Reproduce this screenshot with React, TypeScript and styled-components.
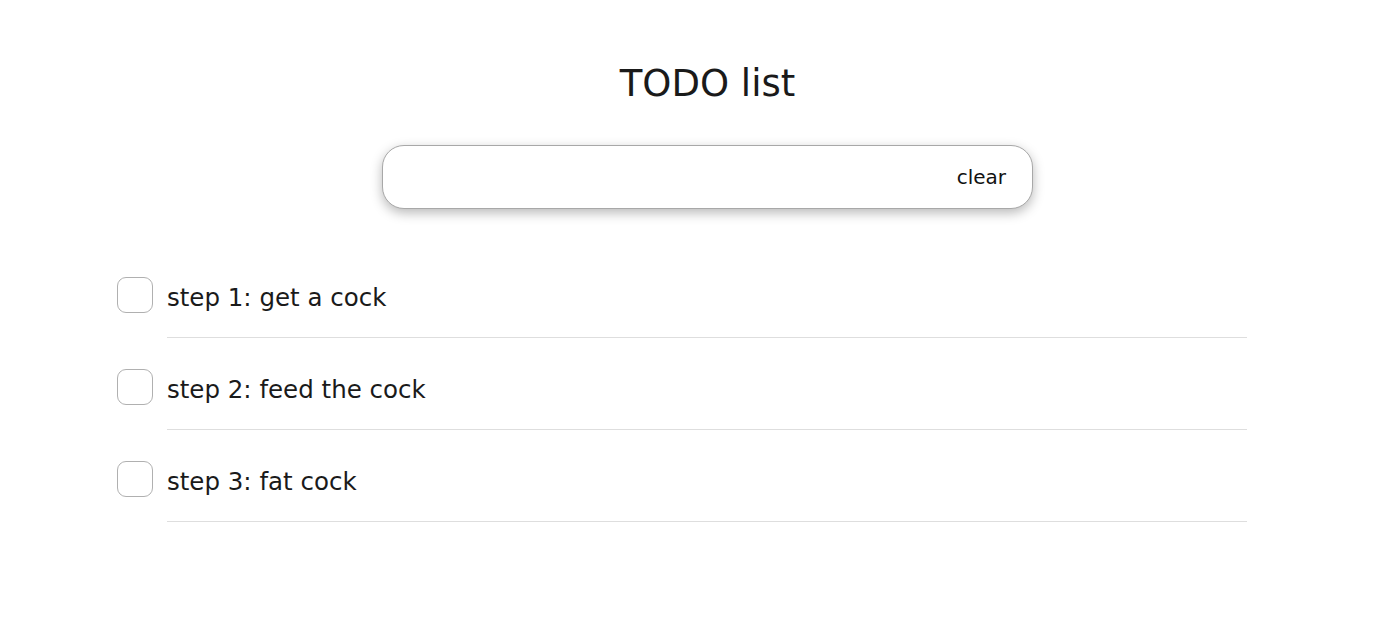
import React from "react";
import styled, { createGlobalStyle } from "styled-components";

const Global = createGlobalStyle`
  html, body { margin: 0; padding: 0; background: #fff; }
  body { font-family: "DejaVu Sans", sans-serif; color: #1a1a1a; }
`;

const Page = styled.div`
  display: flex;
  flex-direction: column;
  padding: 62px 0 0 0;
`;

const Header = styled.div`
  display: flex;
  flex-direction: column;
  align-items: center;
  padding-left: 23px;
`;

const Title = styled.h1`
  margin: 0;
  font-size: 37px;
  font-weight: normal;
  line-height: 44px;
  color: #1a1a1a;
`;

const SearchBar = styled.div`
  margin-top: 39px;
  width: 651px;
  height: 64px;
  box-sizing: border-box;
  border: 1px solid #a8a8a8;
  border-radius: 22px;
  box-shadow: 0 4px 12px rgba(0, 0, 0, 0.28);
  display: flex;
  align-items: center;
  padding: 0 26px 0 20px;
  background: #fff;
`;

const Input = styled.input`
  flex: 1;
  border: none;
  outline: none;
  font: inherit;
  font-size: 19px;
  background: transparent;
`;

const ClearButton = styled.button`
  border: none;
  background: none;
  padding: 0;
  font-family: "DejaVu Sans", sans-serif;
  font-size: 20px;
  color: #111;
  cursor: pointer;
`;

const List = styled.ul`
  list-style: none;
  margin: 68px 0 0 117px;
  padding: 0;
  width: 1130px;
`;

const Item = styled.li`
  display: flex;
  align-items: flex-start;
  gap: 14px;
  height: 92px;
`;

const Check = styled.span`
  flex: none;
  width: 36px;
  height: 36px;
  box-sizing: border-box;
  border: 1px solid #b0b0b0;
  border-radius: 9px;
`;

const Body = styled.div`
  flex: 1;
  height: 60px;
  border-bottom: 1px solid #dedede;
  font-size: 24.5px;
  line-height: 41px;
  color: #1a1a1a;
`;

const items = ["step 1: get a cock", "step 2: feed the cock", "step 3: fat cock"];

export default function App() {
  return (
    <Page>
      <Global />
      <Header>
        <Title>TODO list</Title>
        <SearchBar>
          <Input />
          <ClearButton>clear</ClearButton>
        </SearchBar>
      </Header>
      <List>
        {items.map((t) => (
          <Item key={t}>
            <Check />
            <Body>{t}</Body>
          </Item>
        ))}
      </List>
    </Page>
  );
}
